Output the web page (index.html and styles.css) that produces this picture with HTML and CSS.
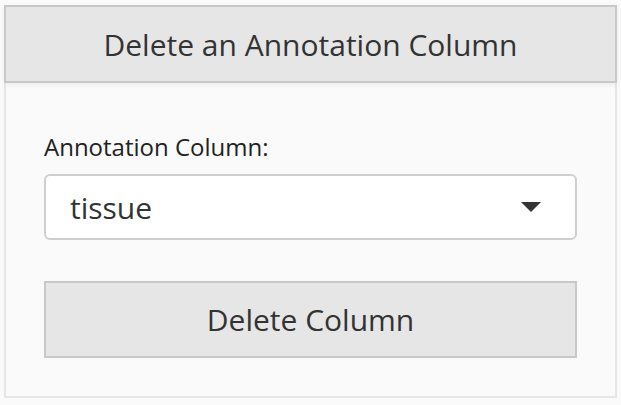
FILE: index.html
```html
<!DOCTYPE html>
<html>
<head>
<meta charset="utf-8">
<link rel="stylesheet" href="styles.css">
</head>
<body>
<div class="panel">
  <div class="panel-head">Delete an Annotation Column</div>
  <div class="panel-body">
    <label class="field-label">Annotation Column:</label>
    <div class="select">
      <span class="select-value">tissue</span>
      <svg class="caret" width="20" height="10" viewBox="0 0 20 10"><path d="M0 0H20L10 10Z" fill="#333"/></svg>
    </div>
    <button class="btn">Delete Column</button>
  </div>
</div>
</body>
</html>
```
FILE: styles.css
```css
html, body {
  margin: 0;
  padding: 0;
  background: #fafafa;
}
body {
  padding: 5px 4px 0 4px;
  font-family: "Open Sans", "Noto Sans", sans-serif;
  color: #333;
}
.panel {
  width: 613px;
  box-sizing: border-box;
}
.panel-head {
  height: 78px;
  box-sizing: border-box;
  border: 2px solid #c8c8c8;
  background: #e6e6e6;
  display: flex;
  align-items: center;
  justify-content: center;
  font-size: 30px;
  color: #333;
  position: relative;
  box-shadow: 0 2px 5px rgba(0,0,0,0.06);
}
.panel-body {
  border: 2px solid #e6e6e6;
  border-top: none;
  background: #fafafa;
  padding: 48px 38px 38px 38px;
  display: flex;
  flex-direction: column;
}
.field-label {
  font-size: 24px;
  line-height: 32px;
  color: #222;
  margin-bottom: 11px;
}
.select {
  height: 66px;
  box-sizing: border-box;
  border: 2px solid #cfcfcf;
  border-radius: 6px;
  background: #fff;
  display: flex;
  align-items: center;
  justify-content: space-between;
  padding: 0 34px 0 24px;
  margin-bottom: 41px;
}
.select-value {
  font-size: 30px;
  color: #333;
}
.caret {
  display: block;
}
.btn {
  height: 77px;
  box-sizing: border-box;
  border: 2px solid #c8c8c8;
  background: #e6e6e6;
  font-family: inherit;
  font-size: 30px;
  color: #333;
  padding: 0;
  margin: 0;
  border-radius: 0;
}
```
